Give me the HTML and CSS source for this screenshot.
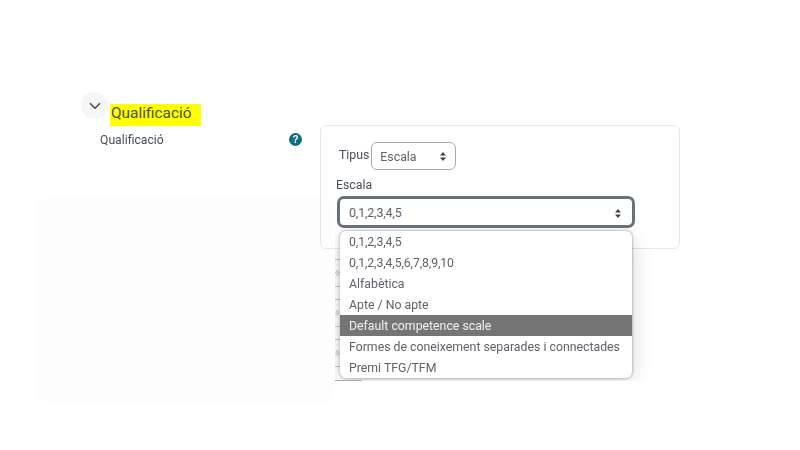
FILE: index.html
```html
<!DOCTYPE html>
<html lang="ca">
<head>
<meta charset="utf-8">
<title>Qualificació</title>
<link rel="stylesheet" href="styles.css">
</head>
<body>
<main class="page">
  <div class="patch"></div>
  <header class="section-head">
    <button class="toggle" type="button" aria-label="Replega">
      <svg width="12" height="8" viewBox="0 0 12 8"><path d="M1 1.2 6 6.2 11 1.2" fill="none" stroke="#3f4a55" stroke-width="1.5"/></svg>
    </button>
    <h2 class="section-title">Qualificació</h2>
  </header>
  <div class="form-row">
    <div class="label-col">
      <span>Qualificació</span>
      <svg class="help" width="13" height="13" viewBox="0 0 13 13"><circle cx="6.5" cy="6.5" r="6.5" fill="#0f6e84"/><text x="6.5" y="10" text-anchor="middle" class="help-mark">?</text></svg>
    </div>
    <div class="card">
      <div class="type-row">
        <label class="type-label">Tipus</label>
        <div class="select small"><span>Escala</span><svg width="6" height="9" viewBox="0 0 6 9"><path d="M3 0 6 3.4H0ZM3 9 0 5.6H6Z" fill="#3a4149"/></svg></div>
      </div>
      <label class="scale-label">Escala</label>
      <div class="select-wrap">
        <div class="select large"><span class="num">0,1,2,3,4,5</span><svg width="6" height="9" viewBox="0 0 6 9"><path d="M3 0 6 3.4H0ZM3 9 0 5.6H6Z" fill="#3a4149"/></svg></div>
        <div class="behind">
          <div class="behind-shadow"></div>
          <div class="dashes"><i></i><i></i><i></i><i></i><i></i><i></i><i></i><i></i><i></i></div>
          <b class="smudge smudge-a"></b><b class="smudge smudge-b"></b><b class="smudge smudge-c"></b>
          <div class="stub"></div>
        </div>
        <ul class="menu">
          <li class="num">0,1,2,3,4,5</li>
          <li class="num">0,1,2,3,4,5,6,7,8,9,10</li>
          <li>Alfabètica</li>
          <li>Apte / No apte</li>
          <li class="active">Default competence scale</li>
          <li>Formes de coneixement separades i connectades</li>
          <li>Premi TFG/TFM</li>
        </ul>
      </div>
    </div>
  </div>
</main>
</body>
</html>
```
FILE: styles.css
```css
* { box-sizing: border-box; }
html, body { margin: 0; background: #fff; }
body { width: 800px; height: 450px; overflow: hidden; font-family: Roboto, Lato, "Liberation Sans", sans-serif; color: #474f58; }
.page { position: relative; height: 450px; padding: 92px 120px 0 81px; filter: blur(.35px); }
.section-head { display: flex; align-items: flex-start; height: 33px; }
.toggle { width: 27px; height: 27px; margin-right: 2px; padding: 0; border: 0; border-radius: 50%; background: #f6f6f6; display: flex; align-items: center; justify-content: center; }
.section-title { margin: 12px 0 0; width: 91px; height: 22px; padding-left: 1px; background: #ffff00; font-size: 15.4px; line-height: 18px; font-weight: 400; color: #4a5020; }
.form-row { position: relative; display: flex; align-items: flex-start; }
.label-col { width: 239px; padding: 7px 18.5px 0 19px; display: flex; justify-content: space-between; font-size: 12.2px; line-height: 17px; }
.help { margin-top: 1px; }
.help-mark { font-size: 10px; font-weight: 700; fill: #fff; font-family: "Liberation Sans", sans-serif; }
.card { width: 360px; height: 124px; padding: 16px 0 0 15px; border: 1px solid #e6e6e6; border-radius: 6px; font-size: 12.3px; }
.type-row { display: flex; align-items: center; padding-left: 3px; gap: 2px; }
.type-label { line-height: 17px; padding-bottom: 2px; }
.select { display: flex; align-items: center; justify-content: space-between; background: #fff; }
.small { width: 85px; height: 28px; padding: 1px 9px 0 8px; border: 1px solid #a6a8aa; border-radius: 6px; font-size: 12.3px; color: #5c636a; }
.scale-label { display: block; margin-top: 7px; line-height: 17px; font-size: 12.3px; }
.select-wrap { position: relative; margin-top: 2px; margin-left: 1px; width: 298px; }
.large { height: 32px; padding: 2px 11px 0 9px; border: 3px solid #69727a; border-radius: 7px; font-size: 12.3px; color: #5c636a; }
.num { letter-spacing: -.1px; }
.behind { position: absolute; left: -2px; top: 32px; width: 330px; height: 153px; overflow: hidden; }
.behind-shadow { position: absolute; left: 4px; top: 6px; width: 293px; height: 143px; border-radius: 6px; box-shadow: 0 4px 22px rgba(0,0,0,.16); }
.dashes { position: absolute; left: 0; top: 31px; display: flex; flex-direction: column; gap: 12.4px; }
.dashes i { display: block; width: 5px; height: 1px; background: #bdbdbd; }
.smudge { position: absolute; left: 1px; width: 3px; height: 6px; border-radius: 1px; background: #ccd3d9; }
.smudge-a { top: 42px; }
.smudge-b { top: 82px; }
.smudge-c { top: 122px; }
.stub { position: absolute; left: 0; bottom: 0; width: 27px; height: 1px; background: #a9a9a9; }
.menu { position: absolute; left: 3px; top: 35px; width: 292px; height: 147px; margin: 0; padding: 0; list-style: none; background: #fff; border-radius: 6px; overflow: hidden; box-shadow: 0 0 3px rgba(0,0,0,.45); font-size: 12.3px; color: #5c636a; }
.menu li { height: 21px; line-height: 22px; padding-left: 9px; white-space: nowrap; }
.menu .active { background: #757575; color: #f2f2f2; }
.patch { position: absolute; left: 36px; top: 197px; width: 297px; height: 206px; border-radius: 12px; background: #fdfdfd; }
```
